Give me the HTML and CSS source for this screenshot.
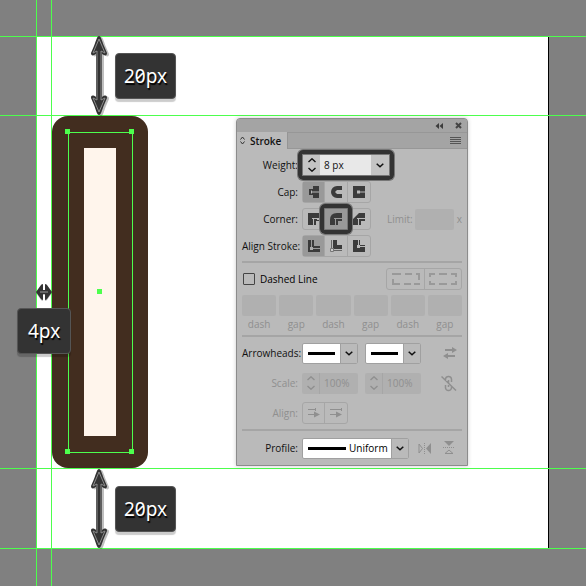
FILE: index.html
```html
<!DOCTYPE html>
<html lang="en">
<head>
<meta charset="utf-8">
<title>Stroke</title>
<link rel="stylesheet" href="styles.css">
</head>
<body>
<svg class="defs" width="0" height="0" aria-hidden="true">
  <defs>
    <symbol id="chevron" viewBox="0 0 8 5"><path d="M.7 .7 4 3.8 7.3 .7" fill="none" stroke="currentColor" stroke-width="1.5"/></symbol>
    <symbol id="updown" viewBox="0 0 8 14"><path d="M.5 4 4 .8 7.5 4M.5 10 4 13.2 7.5 10" fill="none" stroke="currentColor" stroke-width="1.4"/></symbol>
    <symbol id="line" viewBox="0 0 27 3"><path d="M0 0H27V3H0z" fill="#000"/></symbol>
    <g id="measure">
      <path d="M0 0C2 0 3 5 5 10L8 17C8 20 6 20 3 18V61C6 59 8 59 8 62L5 69C3 74 2 79 0 79-2 79-3 74-5 69L-8 62C-8 59-6 59-3 61V18C-6 20-8 20-8 17L-5 10C-3 5-2 0 0 0z" fill="#333"/>
      <path d="M0 3C2 8 4 12 6 17L2 15V64L6 62C4 67 2 71 0 76-2 71-4 67-6 62L-2 64V15L-6 17C-4 12-2 8 0 3z" fill="#333" stroke="#8b8b8b"/>
    </g>
  </defs>
</svg>
<main class="canvas">
  <div class="artboard"></div>
  <svg class="drawing" width="100%" height="100%" aria-hidden="true">
    <rect x="52" y="116" width="96" height="352" rx="16" fill="#422d1f"/>
    <rect x="84" y="148" width="32" height="288" fill="#fff5ec"/>
    <g class="guides" stroke="#4dff4d" shape-rendering="crispEdges">
      <line x1="36.5" y1="0" x2="36.5" y2="100%"/>
      <line x1="51.5" y1="0" x2="51.5" y2="100%"/>
      <line x1="0" y1="36.5" x2="100%" y2="36.5"/>
      <line x1="0" y1="115.5" x2="100%" y2="115.5"/>
      <line x1="0" y1="468.5" x2="100%" y2="468.5"/>
      <line x1="0" y1="548.5" x2="100%" y2="548.5"/>
      <rect x="68.500" y="132.500" width="64" height="320" fill="none"/>
    </g>
    <path d="M65 129h5v5h-5zM129 129h5v5h-5zM65 449h5v5h-5zM129 449h5v5h-5zM97 289h5v5h-5z" fill="#4dff4d"/>
    <use class="cast" href="#measure" x="99" y="36"/>
    <use class="cast" href="#measure" x="99" y="469"/>
    <path class="cast small" d="M36 292 41 285Q43 283 43 285V290H45V285Q45 283 47 285L52 292 47 299Q45 301 45 299V294H43V299Q43 301 41 299z" fill="#333"/>
    <path d="M40 292H48" stroke="#999"/>
  </svg>
  <div class="tag tag-top">20px</div>
  <div class="tag tag-left">4px</div>
  <div class="tag tag-bottom">20px</div>

  <section class="panel" aria-label="Stroke">
    <header class="titlebar">
      <button aria-label="Collapse"><svg width="8" height="6"><path d="M4 0V6L.5 3zM8 0V6L4.500 3z" fill="#3c3c3c"/></svg></button>
      <button aria-label="Close"><svg width="7" height="7"><path d="M1 1 6 6M6 1 1 6" stroke="#444" stroke-width="2"/></svg></button>
    </header>
    <div class="tabs">
      <button class="tab"><svg width="5" height="9"><path d="M.5 3.500 2.500 1 4.500 3.500M.5 5.500 2.500 8 4.500 5.500" fill="none" stroke="#333"/></svg>Stroke</button>
      <button class="menu" aria-label="Panel menu"><svg width="11" height="8"><path d="M0 .5H11M0 2.500H11M0 4.500H11M0 6.500H11" stroke="#555"/></svg></button>
    </div>
    <form class="body">
      <div class="row">
        <label for="weight">Weight:</label>
        <div class="field weight ring">
          <button type="button" class="spin" aria-label="Step weight"><svg width="8" height="14"><use href="#updown"/></svg></button>
          <input id="weight" type="text" value="8 px">
          <button type="button" class="drop" aria-label="Weight presets"><svg width="8" height="5"><use href="#chevron"/></svg></button>
        </div>
      </div>
      <div class="row">
        <span class="label">Cap:</span>
        <div class="group">
          <button type="button" class="on" aria-label="Butt cap"><svg width="12" height="14"><path d="M5 1H11V13H5V10H1V4H5z" fill="#3b3b3b"/><path d="M3 7H11M3.500 5.500V8.500" stroke="#b9b9b9"/></svg></button>
          <button type="button" aria-label="Round cap"><svg width="12" height="14"><path d="M12 1H7A6 6 0 0 0 7 13H12V9H7V5H12z" fill="#3b3b3b"/><path d="M7 7H12M6 6H8V8H6z" stroke="#bababa" fill="#bababa"/></svg></button>
          <button type="button" aria-label="Projecting cap"><svg width="12" height="14"><path d="M0 1H12V13H0z" fill="#3b3b3b"/><path d="M4 5.500H7V6.500H12V7.500H7V8.500H4z" fill="#bababa"/></svg></button>
        </div>
      </div>
      <div class="row">
        <span class="label">Corner:</span>
        <div class="group">
          <button type="button" aria-label="Miter join"><svg width="12" height="12"><path d="M0 0H12V5H9V7H12V8H8V12H0z" fill="#3b3b3b"/><path d="M5.500 12V5.500H12M4 5.500H7" fill="none" stroke="#bababa"/></svg></button>
          <button type="button" class="on ring" aria-label="Round join"><svg width="12" height="12"><path d="M12 0H7Q0 0 0 7V12H8V8H12z" fill="#3b3b3b"/><path d="M5.500 12V5.500H12M4 5.500H7" fill="none" stroke="#999"/></svg></button>
          <button type="button" aria-label="Bevel join"><svg width="12" height="12"><path d="M12 0H6L0 6V12H8V8H12z" fill="#3b3b3b"/><path d="M5.500 12V5.500H12M4 5.500H7" fill="none" stroke="#bababa"/></svg></button>
        </div>
        <label class="limit dim" for="limit">Limit:</label>
        <input id="limit" class="blank" type="text" disabled>
        <span class="times dim">x</span>
      </div>
      <div class="row">
        <span class="label">Align Stroke:</span>
        <div class="group">
          <button type="button" class="on" aria-label="Align to center"><svg width="12" height="12"><path d="M0 0H6V6H12V12H0z" fill="#3b3b3b"/><path d="M3.500 0V8.500H12" fill="none" stroke="#999"/><path d="M2 7H5V10H2z" fill="#aaa"/></svg></button>
          <button type="button" aria-label="Align to inside"><svg width="12" height="12"><path d="M3 0H7V5H12V9H3z" fill="#3b3b3b"/><path d="M1.500 0V10.500H12" fill="none" stroke="#666"/><path d="M.5 8.500H3.500V11.500H.5z" fill="#ccc" stroke="#777"/></svg></button>
          <button type="button" aria-label="Align to outside"><svg width="12" height="12"><path d="M0 0H5V7H12V12H0z" fill="#3b3b3b"/><path d="M6.500 0V5.500H12" fill="none" stroke="#3b3b3b"/><path d="M4 5H7V8H4z" fill="#bababa"/></svg></button>
        </div>
      </div>
      <hr>
      <div class="row spread">
        <label class="check"><input type="checkbox">Dashed Line</label>
        <div class="group dashes">
          <button type="button" disabled aria-label="Preserve exact dashes"><svg width="28" height="12"><path d="M1 12V6M0 1H9M13 1H20M24 1H27V7M1 11H8M12 11H19M22 11H28" fill="none" stroke="#999" stroke-width="2"/></svg></button>
          <button type="button" disabled aria-label="Align dashes to corners"><svg width="28" height="12"><path d="M1 4V1H6M10 1H18M22 1H27V4M1 8V11H6M10 11H18M22 11H27V8" fill="none" stroke="#999" stroke-width="2"/></svg></button>
        </div>
      </div>
      <div class="pattern dim">
        <label><input class="blank" type="text" disabled>dash</label>
        <label><input class="blank" type="text" disabled>gap</label>
        <label><input class="blank" type="text" disabled>dash</label>
        <label><input class="blank" type="text" disabled>gap</label>
        <label><input class="blank" type="text" disabled>dash</label>
        <label><input class="blank" type="text" disabled>gap</label>
      </div>
      <hr>
      <div class="arrows">
        <div class="row">
          <label for="start">Arrowheads:</label>
          <div class="pick"><select id="start"><option></option></select><svg class="sample" width="27" height="3"><use href="#line"/></svg><span class="drop"><svg width="8" height="5"><use href="#chevron"/></svg></span></div>
          <div class="pick second"><select aria-label="End arrowhead"><option></option></select><svg class="sample" width="27" height="3"><use href="#line"/></svg><span class="drop"><svg width="8" height="5"><use href="#chevron"/></svg></span></div>
          <button type="button" class="plain" aria-label="Swap arrowheads"><svg width="14" height="12"><path d="M2 2H9V0L14 3 9 6V4H2zM12 8H5V6L0 9 5 12V10H12z" fill="#8f8f8f"/></svg></button>
        </div>
        <div class="row">
          <label class="dim" for="scale">Scale:</label>
          <div class="field scale"><button type="button" class="spin" disabled aria-label="Step start scale"><svg width="8" height="14"><use href="#updown"/></svg></button><input id="scale" type="text" value="100%" disabled></div>
          <div class="field scale second"><button type="button" class="spin" disabled aria-label="Step end scale"><svg width="8" height="14"><use href="#updown"/></svg></button><input type="text" value="100%" aria-label="End scale" disabled></div>
          <button type="button" class="plain" aria-label="Link scales"><svg width="16" height="17"><path d="M4.500 6V4A3 3 0 0 1 7.500 1.500 3 3 0 0 1 10.500 4V7M4.500 10V13A3 3 0 0 0 7.500 15.500 3 3 0 0 0 10.500 13V11M7.500 5V8M7.500 10V12M.5 1.500 15 15.500" fill="none" stroke="#8f8f8f" stroke-width="1.500"/></svg></button>
        </div>
        <div class="row">
          <span class="label dim">Align:</span>
          <div class="group">
            <button type="button" disabled aria-label="Extend tip"><svg width="12" height="10"><path d="M0 1.500H7M0 6.500H7M7.500 0V3" stroke="#8f8f8f"/><path d="M6 3.500 12 6.500 6 9.500z" fill="#8f8f8f"/></svg></button>
            <button type="button" disabled aria-label="Place tip at end"><svg width="12" height="10"><path d="M0 1.500H12M0 6.500H7M11.500 0V3" stroke="#8f8f8f"/><path d="M6 3.500 12 6.500 6 9.500z" fill="#8f8f8f"/></svg></button>
          </div>
        </div>
      </div>
      <hr>
      <div class="row profile">
        <label for="profile">Profile:</label>
        <div class="pick wide"><select id="profile"><option>Uniform</option></select><svg class="sample" width="38" height="3"><path d="M0 0H38V3H0z"/></svg><span class="drop"><svg width="8" height="5"><use href="#chevron"/></svg></span></div>
        <button type="button" class="plain flip" aria-label="Flip along"><svg width="14" height="11"><path d="M1 1 4.500 5.500 1 10z" fill="none" stroke="#8f8f8f"/><path d="M13 0V11L8 5.500z" fill="#8f8f8f"/><path d="M6.500 0V11" stroke="#8f8f8f" stroke-dasharray="1 1"/></svg></button>
        <button type="button" class="plain" aria-label="Flip across"><svg width="14" height="14"><path d="M1 0H11L6 5z" fill="#8f8f8f"/><path d="M2 12.500H10L6 9z" fill="none" stroke="#8f8f8f"/><path d="M0 6.500H12" stroke="#8f8f8f" stroke-dasharray="1 1"/></svg></button>
      </div>
    </form>
  </section>
</main>
</body>
</html>
```
FILE: styles.css
```css
* { box-sizing: border-box; }
body { margin: 0; font: 500 10px/14px "Open Sans", "Noto Sans", sans-serif; color: #111; }
button, input, select { margin: 0; padding: 0; border: 0; border-radius: 0; background: none; font: inherit; color: inherit; }
svg { display: block; flex: none; }
.defs { position: absolute; }

.canvas { position: relative; min-height: 100vh; background: #808080; overflow: hidden; }
.artboard { position: absolute; inset: 37px; background: #fff; border-right: 1px solid #000; }
.drawing { position: absolute; inset: 0; }
.cast { filter: drop-shadow(2px 1px 0 rgba(0, 0, 0, .25)); }
.small { filter: drop-shadow(0 1px 0 rgba(0, 0, 0, .25)); }

.tag {
  position: absolute;
  padding: 11px 8px 10px;
  border: 1px solid #555;
  border-radius: 4px;
  background: #333;
  box-shadow: 0 3px 1px rgba(0, 0, 0, .2);
  color: #fff;
  font: 19px/23px "Noto Sans", sans-serif;
  font-feature-settings: "zero";
  text-shadow: 1px 2px 1px #000;
}
.tag-top { left: 115px; top: 53px; }
.tag-left { left: 17px; top: 308px; padding-left: 10px; padding-right: 10px; }
.tag-bottom { left: 115px; top: 486px; }

.panel {
  position: absolute;
  left: 236px;
  top: 118px;
  width: 232px;
  border: 1px solid #8c8c8c;
  border-radius: 4px 4px 0 0;
  background: #bababa;
  box-shadow: 0 0 4px rgba(0, 0, 0, .2);
}
.titlebar { display: flex; justify-content: flex-end; align-items: center; gap: 12px; height: 13px; padding-right: 5px; border-radius: 3px 3px 0 0; background: #a4a4a4; }
.tabs { display: flex; justify-content: space-between; height: 17px; background: #a4a4a4; box-shadow: inset 0 1px #979797, inset 0 -1px #979797; }
.tab { display: flex; align-items: center; gap: 5px; padding: 0 6px 0 3px; border-right: 1px solid #959595; background: #bababa; font-weight: 600; }
.menu { padding-right: 6px; }

.body { display: flex; flex-direction: column; gap: 5px; padding: 5px 5px 6px; }
.row { display: flex; align-items: center; height: 22px; }
.row > label:first-child, .label { flex: none; width: 56px; margin-right: 4px; text-align: right; white-space: nowrap; }
.dim, .row > .dim { color: #8f8f8f; }
hr { width: 100%; height: 2px; margin: 0; border: 0; background: #a5a5a5; }
.row + hr { margin-top: -1px; }

.field { display: flex; height: 20px; }
.field input { min-width: 0; flex: 1; padding-left: 4px; }
.spin, .drop { display: grid; place-items: center; flex: none; width: 17px; }
.weight { width: 86px; margin-left: 1px; background: #c4c4c4; }
.weight input { background: #e8e8e8; }
.weight .drop { width: 18px; }
.scale { width: 56px; height: 21px; border-radius: 2px; background: #b0b0b0; color: #8f8f8f; }
.scale .spin { width: 18px; border-right: 1px solid #a6a6a6; }
.second { margin-left: 7px; }

.ring { position: relative; }
.ring::after {
  content: "";
  position: absolute;
  inset: -5px;
  border: 4px solid #333;
  border-radius: 5px;
  box-shadow: 0 0 0 1px #777, inset 0 0 0 1px #777;
  pointer-events: none;
}

.group { display: flex; height: 22px; border: 1px solid #a6a6a6; border-radius: 3px; }
.group button { display: grid; place-items: center; width: 21px; }
.group button + button { width: 23px; border-left: 1px solid #a6a6a6; }
.group .on { background: #999; }
.limit { margin-left: 16px; }
.blank { height: 21px; border-radius: 2px; background: #b0b0b0; }
.row .blank { width: 39px; margin-left: 2px; }
.times { margin-left: auto; }

.spread { justify-content: space-between; }
.row > .check:first-child { display: flex; align-items: center; gap: 5px; width: auto; color: #000; }
.check input { appearance: none; width: 12px; height: 12px; margin-left: 1px; border: 1px solid #444; border-radius: 1px; }
.dashes button, .dashes button + button { width: 37px; }

.pattern { display: grid; grid-template-columns: repeat(6, 1fr); gap: 3px; margin-bottom: -1px; }
.pattern label { display: flex; flex-direction: column; gap: 1px; text-align: center; }
.pattern .blank { width: 100%; }

.arrows { display: flex; flex-direction: column; gap: 8px; }
.pick { position: relative; display: flex; align-items: center; width: 56px; height: 21px; border: 1px solid #a0a0a0; border-radius: 2px; background: #fff; }
.pick select { appearance: none; width: 100%; height: 100%; }
.sample { position: absolute; left: 5px; top: 8px; pointer-events: none; }
.pick .drop { position: absolute; right: 0; top: 0; bottom: 0; background: #bababa; border-left: 1px solid #a0a0a0; pointer-events: none; }
.wide { width: 107px; }
.wide select { padding-left: 46px; color: #000; }
.plain { display: grid; place-items: center; margin-left: auto; margin-right: 5px; }
.profile { margin-top: 1px; }
.flip { margin-left: 9px; }
```
